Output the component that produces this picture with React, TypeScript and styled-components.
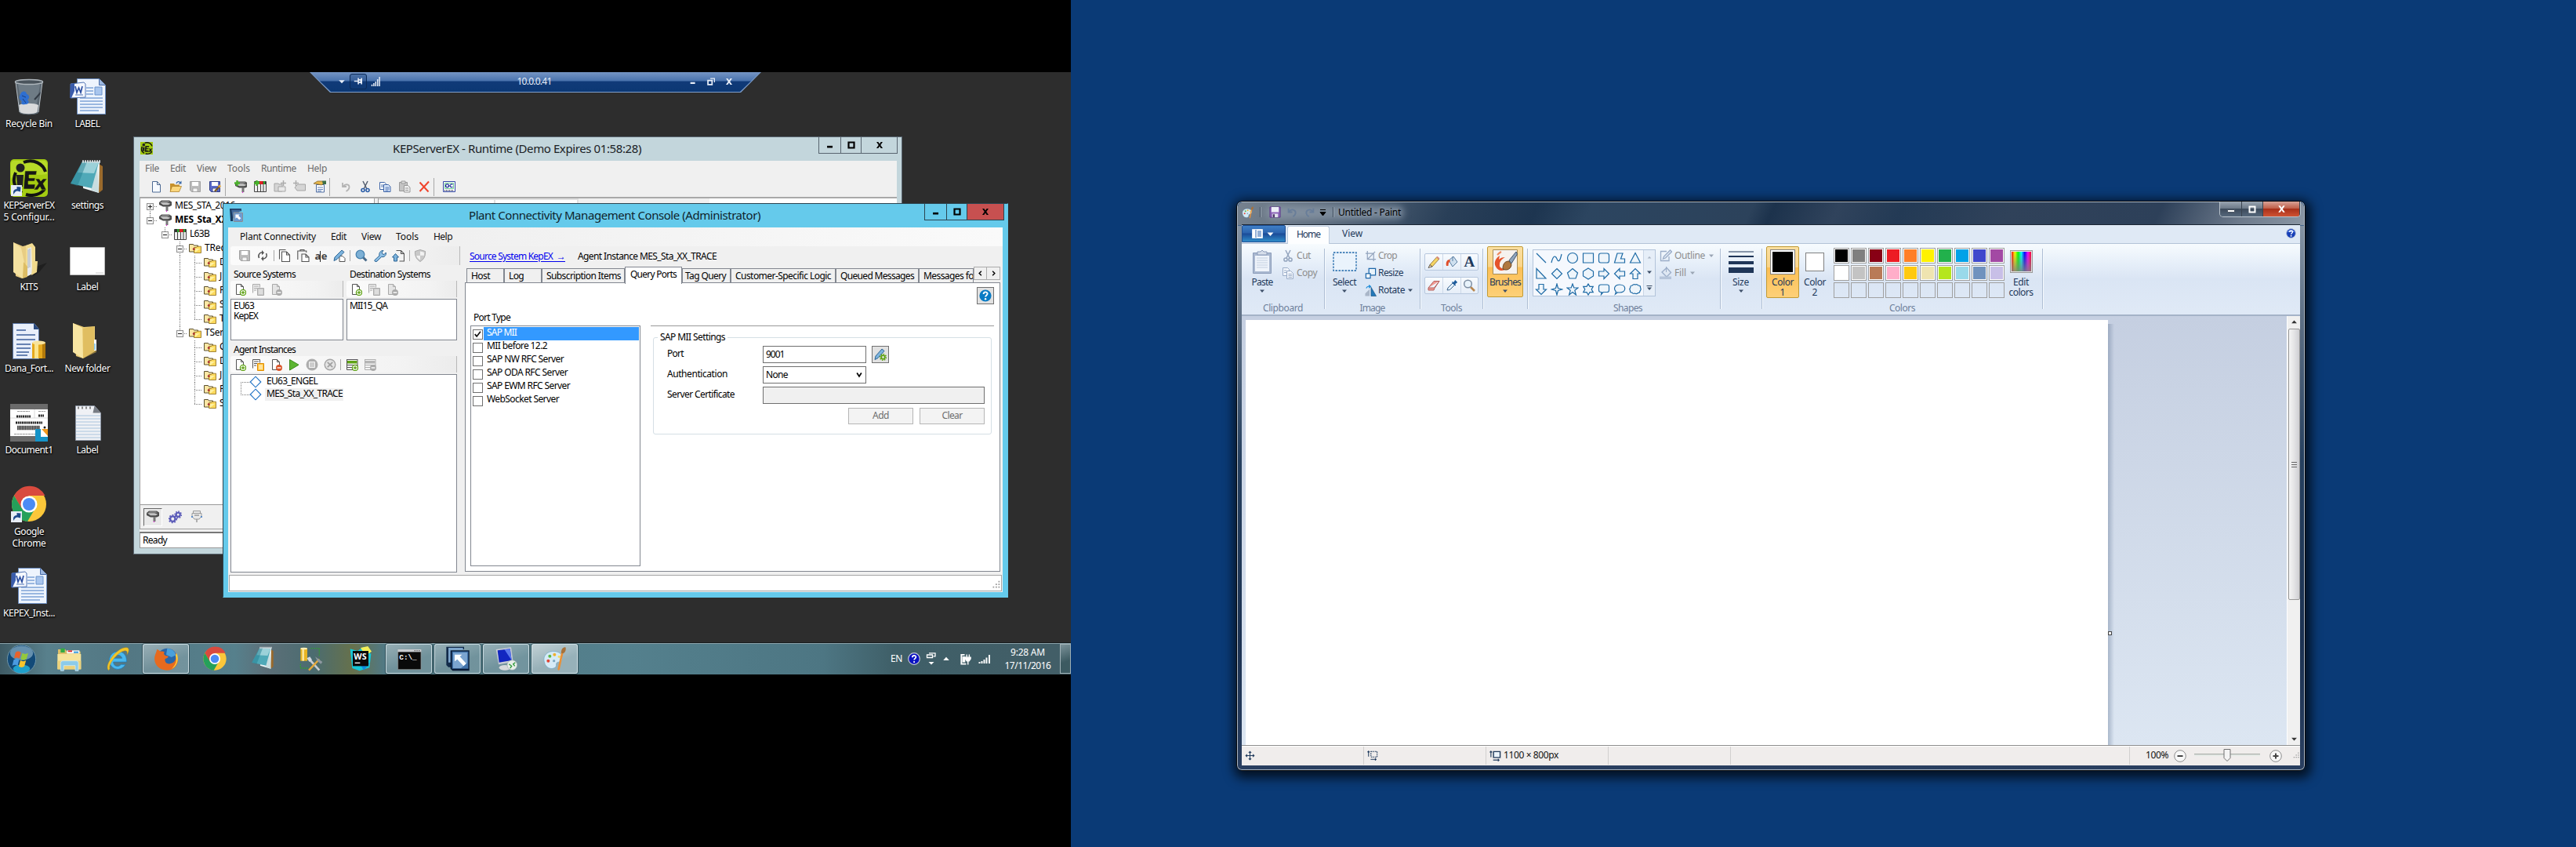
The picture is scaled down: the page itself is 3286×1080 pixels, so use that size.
import React, { useLayoutEffect, useRef } from 'react';
import styled, { createGlobalStyle, css } from 'styled-components';

const Global = createGlobalStyle`
  * { box-sizing: border-box; }
  html, body { margin: 0; padding: 0; background: #000; }
  body { font-family: 'Noto Sans', 'Open Sans', sans-serif; font-size: 12px; line-height: 14px; color: #000; overflow: hidden; }
  svg { display: block; flex: none; }
`;

/* ---------- text ---------- */

const TextSpan = styled.span<{ $color?: string; $size?: number; $bold?: boolean; $line?: boolean }>`
  display: inline-block;
  flex: none;
  white-space: pre;
  color: ${p => p.$color || 'inherit'};
  font-size: ${p => (p.$size ? p.$size + 'px' : 'inherit')};
  font-weight: ${p => (p.$bold ? 700 : 400)};
  ${p => p.$line && css`text-decoration: underline; text-underline-offset: 2px;`}
`;

type TProps = { w?: number; color?: string; size?: number; bold?: boolean; line?: boolean; children: string };

/* A run of text whose tracking is adjusted so that it fills the width w. */
function T({ w, color, size, bold, line, children }: TProps) {
  const ref = useRef<HTMLSpanElement>(null);
  useLayoutEffect(() => {
    const el = ref.current;
    if (!el || !w) return;
    el.style.letterSpacing = '0px';
    const natural = el.getBoundingClientRect().width;
    const gap = (w - natural) / children.length;
    el.style.letterSpacing = Math.max(-1, Math.min(1, gap)).toFixed(3) + 'px';
  }, [w, children]);
  return <TextSpan ref={ref} $color={color} $size={size} $bold={bold} $line={line}>{children}</TextSpan>;
}

/* ---------- icons ---------- */

const page = <path d="M3.5 1.5h6l3 3v10h-9z M9.5 1.5v3h3" fill="#fff" stroke="#555" />;
const greyPage = <path d="M3.5 1.5h6l3 3v10h-9z M9.5 1.5v3h3" fill="#e4e4e4" stroke="#a9a9a9" />;
const plus = <g><circle cx="12" cy="12" r="3.6" fill="#fff" stroke="#5fa315" strokeWidth="1.3" /><path d="M12 9.8v4.4M9.8 12h4.4" stroke="#5fa315" strokeWidth="1.3" /></g>;
const minus = (c: string) => <g><circle cx="12" cy="12" r="4" fill={c} /><path d="M9.6 12h4.8" stroke="#fff" strokeWidth="1.4" /></g>;
const device = (
  <g>
    <path d="M0 3l3-2.500h10l3 2v4.500l-3 1.500H5L0 6z" fill="#4c4c4c" />
    <path d="M1 3.200h9l4.500 1.500-3 1.500H5z" fill="#c4c4c4" />
    <path d="M4 1.300h8l2 1.500H2z" fill="#8c8c8c" />
    <path d="M10 8v6" stroke="#777" strokeWidth="3" />
    <path d="M9.500 13.500v1.500" stroke="#e02ad8" strokeWidth="1.200" />
  </g>
);
const rack = (
  <g>
    <path d="M.5 1.5h15v13H.5z" fill="#eee" stroke="#444" />
    <path d="M1 1h14v4H1z" fill="#333" />
    <path d="M4 1h2.500v4H4zM12 1h2v4h-2z" fill="#2ea52e" /><path d="M7 1h4.500v4H7z" fill="#d22" />
    <path d="M4.500 5v9M8.500 5v9M12 5v9" stroke="#444" />
  </g>
);
const greenPlus = <path d="M3.5 0v7M0 3.500h7" stroke="#4bb32b" strokeWidth="2.4" />;
const floppy = (a: string, b: string) => (
  <g><path d="M1.5 1.5h13v13h-11l-2-2z" fill={a} stroke={b} /><path d="M4 2h8v5H4z" fill="#fff" /><path d="M5 10h6v4.500H5z" fill="#f4f4f4" stroke={b} strokeWidth=".8" /></g>
);

const small: Record<string, React.ReactNode> = {
  new: <path d="M3.5 1.5h6l4 4v9.500h-10z M9.500 1.500v4h4" fill="#f6faff" stroke="#4d6a94" />,
  open: <g><path d="M1 4h5l1 1.500h6V14H1z" fill="#c9922b" /><path d="M3.500 7.500h12l-3 7H1z" fill="#fbd77c" stroke="#a87820" strokeWidth=".7" /><path d="M9 4c1-3 4-3 5-1" stroke="#3b6aa8" strokeWidth="1.400" fill="none" /><path d="M15.500 .5v4h-4z" fill="#3b6aa8" /></g>,
  saveGrey: floppy('#bdbdbd', '#a0a0a0'),
  saveAs: <g>{floppy('#5c6ccc', '#2d3b86')}<path d="M8 14l6.500-7" stroke="#7c5a21" strokeWidth="2.500" /><path d="M13 8.500l2-2.200" stroke="#e0a73f" strokeWidth="3" /></g>,
  device,
  addDevice: <g><g transform="translate(1 1)">{device}</g>{greenPlus}</g>,
  rack,
  addRack: <g>{rack}{greenPlus}</g>,
  foldersGrey: <g><path d="M1 4h5l1 1h4v9H1z" fill="#d5d5d5" stroke="#a5a5a5" /><path d="M6 8h9v6H6z" fill="#e8e8e8" stroke="#a5a5a5" /><path d="M12.500 0v7M9 3.500h7" stroke="#aaa" strokeWidth="1.500" /></g>,
  tagGrey: <g><path d="M6 5h9.500v8H5l-3-4z" fill="#d5d5d5" stroke="#a5a5a5" /><path d="M3.500 0v7M0 3.500h7" stroke="#aaa" strokeWidth="1.500" /></g>,
  props: <g><path d="M3.500 5.500h10v9.500h-10z" fill="#fff" stroke="#4b6aa0" /><path d="M5 9h7M5 11.500h7M5 13.500h5" stroke="#5d7fb8" /><path d="M0 4l5-3h6l2 3-3 2-4-1z" fill="#e6b74c" stroke="#7b5a1d" strokeWidth=".7" /><path d="M11 .5h5v4.500h-4z" fill="#3d6e48" /></g>,
  undo: <path d="M4 3v5h5M4.500 8C8 3.500 13 5 12.500 9c-.2 2.500-2 4-4 5" fill="none" stroke="#b4b4b4" strokeWidth="1.800" />,
  cut: <g fill="none"><path d="M5 1l5 10M11 1L6 11" stroke="#555f70" strokeWidth="1.500" /><circle cx="5" cy="12.500" r="2" stroke="#2c5ea8" strokeWidth="1.600" /><circle cx="11" cy="12.500" r="2" stroke="#2c5ea8" strokeWidth="1.600" /></g>,
  copy: <g fill="#fff" stroke="#3d64a8"><path d="M1.500 2.500h6l2 2v7h-8z" /><path d="M6.500 5.500h6l2.500 2.500v6.500H6.500z" fill="#dbe8fb" /><path d="M3 6h3M3 8h3M8.500 9h5M8.500 11h5M8.500 13h4" strokeWidth=".9" /></g>,
  pasteGrey: <g stroke="#999"><path d="M1.500 2.500h10v11h-10z" fill="#c4c4c4" /><path d="M4 1h5v3H4z" fill="#ddd" /><path d="M7.500 6.500h5l2.500 2.500v6H7.500z" fill="#eee" /><path d="M9 10h4M9 12.500h4" /></g>,
  del: <path d="M2.500 2.500l11 12M14 1.500L2.500 14" stroke="#f0442c" strokeWidth="2" fill="none" />,
  qc: <g><path d="M.5 1.500h15v13H.5z" fill="#fff" stroke="#3347a5" /><path d="M2.500 3.500h11v7h-11z" fill="#fff" stroke="#3b6" strokeWidth=".7" /><circle cx="5.500" cy="6.800" r="2" fill="none" stroke="#22309a" strokeWidth="1.300" /><path d="M12.500 5.400c-2-1.200-3.500 .2-3.500 1.400s1.500 2.600 3.500 1.400" fill="none" stroke="#22309a" strokeWidth="1.300" /><path d="M2 12.700h12" stroke="#335" strokeDasharray="1 1" strokeWidth="1.500" /></g>,
  folders: <g><path d="M.5 2.500h5l1 1.500h5v8H.5z" fill="#fbe7a4" stroke="#5b5030" /><path d="M6.500 6.500h3l1-1.300h5v8.300h-9z" fill="#fcd95c" stroke="#8a6a1c" strokeWidth=".8" /><path d="M8 8h6l-6 5z" fill="#fdf0a0" /><circle cx="6.300" cy="8.500" r="1.500" fill="#a33" /></g>,
  gears: <g fill="none" stroke="#5a5ab8"><circle cx="5" cy="10" r="3" strokeWidth="2.200" /><circle cx="5" cy="10" r="4.600" strokeWidth="1.600" strokeDasharray="1.700 1.700" /><circle cx="11.500" cy="5" r="2.400" strokeWidth="2" /><circle cx="11.500" cy="5" r="3.900" strokeWidth="1.500" strokeDasharray="1.500 1.500" /></g>,
  plug: <g fill="#e8e8e8" stroke="#9a9a9a"><path d="M3.500 .5h9v3h-9z" /><path d="M2 3.500h12v4l-3 3.500H5L2 7.500z" /><path d="M5 6h6M8 11v4" strokeWidth="1.500" /><path d="M2 7v2M14 7v2" stroke="#3477c8" strokeWidth="1.500" /></g>,
  refresh: <g fill="none" stroke="#555" strokeWidth="1.500"><path d="M3.500 11C1.500 7 4.500 3.500 8 4.200" /><path d="M12.500 5c2 4-1 7.500-4.500 6.800" /><path d="M7 1l3 3.200L7 7.200z M9 15l-3-3.200L9 8.800z" fill="#555" stroke="none" /></g>,
  copy2: <g fill="#fff" stroke="#555" strokeWidth="1.100"><path d="M1.500 12.500V.5h8" fill="none" /><path d="M4.500 3h6l4 4v8.500h-10z M10.500 3v4h4" /></g>,
  paste2: <g fill="#fff" stroke="#555" strokeWidth="1.100"><path d="M.8 13V2h11v2M4 2V.5h5V2" fill="#f4f4f4" /><path d="M6 6h5l4 4v5.500H6z M11 6v4h4" /></g>,
  pen: <g><path d="M8 8.500h4l3 3v4H8z" fill="#fff" stroke="#555" /><path d="M2 10L11 1l3 2.500-9 9-4 2z" fill="#7db4de" stroke="#2a6393" /></g>,
  penGear: <g><path d="M2 10L10 1l3 2.500-8 9-4 2z" fill="#7db4de" stroke="#2a6393" /><circle cx="11.500" cy="11.500" r="2.300" fill="none" stroke="#5fa315" strokeWidth="1.800" /><circle cx="11.500" cy="11.500" r="3.900" fill="none" stroke="#5fa315" strokeWidth="1.500" strokeDasharray="1.500 1.500" /></g>,
  find: <g><path d="M10 10l4.500 4.500" stroke="#4a6b8a" strokeWidth="3" /><circle cx="6.500" cy="6.500" r="5.300" fill="#7db0d5" stroke="#4682b0" strokeWidth="1.300" /></g>,
  wrench: <path d="M1 13.500l6-5.500c-1-3 1.500-7 5-6.500l-2 2.500 1 2 2.200 .4L15.300 4c1 3.500-2.500 6.500-5.500 5.400L4 15c-1.500 1.500-4-.2-3-1.500z" fill="#8fc0e6" stroke="#2a6393" />,
  export: <g><path d="M5.500 1.500h6l4 4v9.500h-6M11.500 1.500v4h4" fill="none" stroke="#555" strokeWidth="1.100" /><path d="M4.500 5.500L8.500 10H6.500v5h-4v-5H.5z" fill="#7db4de" stroke="#2a6393" /></g>,
  shield: <g><path d="M8 .5l6.500 2c.5 6-2 10.500-6.500 13-4.500-2.500-7-7-6.500-13z" fill="#c9c9c9" stroke="#a8a8a8" /><path d="M8 2.500l4.800 1.300 .2 4H8zM8 8v5.500C5.500 12 3.500 10 3.300 8z" fill="#f2f2f2" /></g>,
  pageAdd: <g>{page}{plus}</g>,
  pageDel: <g>{page}{minus('#d9552a')}</g>,
  pageDelGrey: <g>{greyPage}{minus('#aaa')}</g>,
  dup: <g><path d="M1.500 12.500v-11h9v4" fill="#fff" stroke="#555" /><path d="M3 4h6M3 6.500h4M3 9h3" stroke="#555" /><path d="M7.500 6.500h8v9h-8z" fill="#ffc63b" stroke="#e08a00" /><path d="M9 9h5M9 11h5M9 13h5" stroke="#fff" /></g>,
  dupGrey: <g><path d="M1.500 12.500v-11h9v4" fill="#eee" stroke="#aaa" /><path d="M3 4h6M3 6.500h4M3 9h3" stroke="#aaa" /><path d="M7.500 6.500h8v9h-8z" fill="#ccc" stroke="#aaa" /><path d="M9 9h5M9 11h5M9 13h5" stroke="#eee" /></g>,
  play: <path d="M2.500 1.500L14 8.200 2.500 15z" fill="#5cb531" stroke="#3c8a1c" />,
  stop: <g><circle cx="8" cy="8" r="7.500" fill="#adadad" /><path d="M4.500 4.500h7v7h-7z" fill="#ccc" stroke="#f4f4f4" /></g>,
  cancel: <g><circle cx="8" cy="8" r="6.800" fill="#e4e4e4" stroke="#a5a5a5" strokeWidth="1.400" /><path d="M4.800 4.800l6.400 6.400M11.200 4.800l-6.400 6.400" stroke="#a0a0a0" strokeWidth="1.700" /></g>,
  tblAdd: <g><path d="M1.500 1v13.500h8M15 1v9M1 1.500h14M1.500 8.500h13.500M2 11.500h6" fill="none" stroke="#555" /><path d="M2 3h12.500v3.500H2z" fill="#5fa315" />{plus}</g>,
  tblDel: <g><path d="M1.500 1v13.500h8M15 1v9M1 1.500h14M1.500 8.500h13.500M2 11.500h6" fill="none" stroke="#b0b0b0" /><path d="M2 3h12.500v3.500H2z" fill="#b5b5b5" />{minus('#aaa')}</g>,
  app: <g><path d="M0 0h14v3H4v12H1z" fill="#18395f" /><path d="M2 1.500h12L4 12z" fill="#41699b" /><path d="M5 5h10.500v10.500H5z" fill="#6d9ad0" stroke="#fff" /><path d="M5 5h10.500v10.500H5z" fill="none" stroke="#123" strokeWidth=".5" /><path d="M7 7h5l-1.500 1.500 3 3-2 2-3-3L7 12z" fill="#fff" /></g>,
  diamond: <path d="M8 1.200L14.800 8 8 14.800 1.200 8z" fill="#fff" stroke="#1f72c4" strokeWidth="1.100" />,
  check: <path d="M2.500 7.500l3.500 4 7-9" fill="none" stroke="#111" strokeWidth="2.500" />,
  help: <g><circle cx="8" cy="8" r="7.600" fill="#0a7bc4" /><path d="M5.600 6c0-3.500 5-3.300 5-.4 0 1.900-2.500 1.900-2.500 4" fill="none" stroke="#fff" strokeWidth="1.900" /><circle cx="8.100" cy="12.200" r="1.200" fill="#fff" /></g>,
  helpBlue: <g><circle cx="8" cy="8" r="7.300" fill="#1840b8" stroke="#b8c4dc" strokeWidth="1.200" /><path d="M2.500 6a6 6 0 0111 0z" fill="#6c92ec" /><path d="M5.800 6.200c0-3.200 4.600-3 4.600-.4 0 1.800-2.300 1.800-2.300 3.700" fill="none" stroke="#fff" strokeWidth="1.700" /><circle cx="8.100" cy="12" r="1.100" fill="#fff" /></g>,
  helpNavy: <g><circle cx="8" cy="8" r="7.300" fill="#0a12c0" stroke="#c4c8d4" strokeWidth="1.200" /><path d="M5.800 6.200c0-3.200 4.600-3 4.600-.4 0 1.800-2.300 1.800-2.300 3.700" fill="none" stroke="#fff" strokeWidth="1.700" /><circle cx="8.100" cy="12" r="1.100" fill="#fff" /></g>,
  min: <path d="M3.500 10.500h8" stroke="currentColor" strokeWidth="3" />,
  max: <path d="M4 4h8v8H4z" fill="none" stroke="currentColor" strokeWidth="2.500" />,
  close: <path d="M3.500 3.500h2.600L8 6.200l1.900-2.700h2.600L9.400 8l3.200 4.500H9.900L8 9.700l-1.900 2.800H3.400L6.600 8z" fill="currentColor" />,
  restore: <g fill="none" stroke="currentColor" strokeWidth="1.400"><path d="M3.500 6.500h6v6h-6z" strokeWidth="2" /><path d="M7 3.500h6V9" /></g>,
  down: <path d="M3 5.500h10L8 11z" fill="currentColor" />,
  up: <path d="M3 10.500h10L8 5z" fill="currentColor" />,
  pin: <path d="M1 8h6M7.500 3v10M7.500 6h4v4h-4M12.500 3v10" stroke="currentColor" strokeWidth="2" fill="none" />,
  signal: <path d="M2 16v-3M5.200 16v-5.500M8.400 16V8M11.600 16V4M14.800 16V0" stroke="currentColor" strokeWidth="2" />,
  left: <path d="M10 4L6 8l4 4" stroke="currentColor" strokeWidth="2" fill="none" />,
  right: <path d="M6 4l4 4-4 4" stroke="currentColor" strokeWidth="2" fill="none" />,
  chev: <path d="M3.500 4L8 11 12.500 4" stroke="currentColor" strokeWidth="2.800" fill="none" />,
  power: <g fill="none" stroke="#fff" strokeWidth="1.500"><path d="M7 2H2.500v12.500H9" strokeWidth="2" /><path d="M4.500 5h2.500v6.500H4.500z" fill="#fff" /><path d="M8 5.500h7v2l-2 3h-3l-2-3zM9.800 1.500v4M13.200 1.500v4M11.500 11v4.500" fill="#fff" /></g>,
  kbd: <g fill="none" stroke="#fff" strokeWidth="1.300"><path d="M5 .8h8v4h-2.500M2.500 3h7v3.500h-7z" /><path d="M4.500 12h7L8 15.500z" fill="#fff" stroke="none" /></g>,

  savePaint: <g><path d="M1 1h14v14H1z" fill="#8c63b8" stroke="#5c3a86" /><path d="M3 1h10v7H3z" fill="#eceff6" /><path d="M4 10h8v5H4z" fill="#dfe2ec" /><path d="M5 11h2.500v4H5z" fill="#4a3568" /></g>,
  undoP: <path d="M2 2v6h6M3 7c3.500-5 11-3 10 3-.4 2.500-2 4-4 5" stroke="#687d99" strokeWidth="2.300" fill="none" />,
  redoP: <path d="M14 2v6H8M13 7C9.500 2 2 4 3 10c.4 2.500 2 4 4 5" stroke="#687d99" strokeWidth="2.300" fill="none" />,
  cutP: <g fill="none" stroke="#94a5be" strokeWidth="1.500"><path d="M5 1l5 10M11 1L6 11" /><circle cx="5" cy="13" r="2.100" /><circle cx="11" cy="13" r="2.100" /></g>,
  copyP: <g fill="#f1f5fb" stroke="#9badc8"><path d="M1.500 1.500h6l2 2v8h-8z" /><path d="M6.500 5.500h5l3 3v7h-8z" /><path d="M3 5h3M3 7.500h3M8.500 9.500h4.500M8.500 11.500h4.500M8.500 13.500h4.500" /></g>,
  cropP: <path d="M3.500 1v11.500H15M1 4.500h11V15M3.500 12.500L14 2" stroke="#94a5be" strokeWidth="1.300" fill="none" />,
  resizeP: <g stroke="#1c66a8" strokeWidth="1.300"><path d="M5.500 1.500h9v9h-9z" fill="#e9f3fb" /><path d="M1.500 8.500h6v6h-6z" fill="#fff" /></g>,
  rotateP: <g><path d="M.5 15.500V12l6-6v9.500z" fill="#a9b6c8" /><path d="M8.500 3.500l7 12h-7z" fill="#2479ba" stroke="#15507f" strokeWidth=".7" /><path d="M2 5c.5-2.500 3-3 5-2.500M5.500 .5l2.500 2-2.500 2" stroke="#1f8bd8" strokeWidth="1.200" fill="none" /></g>,
  pencil: <g><path d="M3 11.500L12 1.500l3 2.500-9 10z" fill="#f5d565" stroke="#8a6a2a" strokeWidth=".8" /><path d="M11 2.600L12.500 .8l2.900 2.500-1.500 1.800z" fill="#d98c7c" /><path d="M3 11.500L1 15.500l5-1.500z" fill="#f3d6a6" stroke="#333" strokeWidth=".7" /></g>,
  bucket: <g><path d="M4 6l6-5 5 7-6 6z" fill="#cfe0ef" stroke="#5b7ea2" /><path d="M9 1v6" stroke="#5b7ea2" /><path d="M1 13c-1-5 1-8 4-8l1 2c-2 1-2.500 3-2.500 6z" fill="#e0502c" /></g>,
  eraser: <path d="M1 11L8 2.500h7L9 11.500 8 14H1z M1 11h7.500L15 2.500" fill="#ee9a94" stroke="#b5605c" />,
  picker: <g><path d="M2 14l1-3 6-6 2.500 2.500-6 6z" fill="#dfeefb" stroke="#41688f" /><path d="M8 4l1-1 1.200 1 2-3 3 3-3 2.300 1 1.200-1 1z" fill="#1d5c9c" /></g>,
  lens: <g><path d="M10 10l5 5" stroke="#b98850" strokeWidth="2.600" /><circle cx="6.500" cy="6" r="4.800" fill="#e8f3fb" stroke="#7d8ea3" strokeWidth="1.500" /></g>,
  outlineP: <g fill="none" stroke="#9badc8" strokeWidth="1.300"><path d="M9 2.500H1.500v12H12V9" /><path d="M4.500 12l1-3L13.500 1 15.500 3 7.500 11z" fill="#dfe8f3" /></g>,
  fillP: <g><path d="M3 7l6-5.500 5.500 6L9 13z" fill="#dfe8f3" stroke="#9badc8" strokeWidth="1.300" /><path d="M8.500 0v7" stroke="#9badc8" /><path d="M0 12.500h15V16H0z" fill="#b6c5da" /></g>,
  move: <path d="M8 1.500v13M1.500 8h13M6 3.500l2-2 2 2M6 12.500l2 2 2-2M3.500 6l-2 2 2 2M12.500 6l2 2-2 2" stroke="#1e395b" strokeWidth="1.300" fill="none" />,
  selSize: <g fill="none" stroke="#1e395b" strokeWidth="1.200"><path d="M5.500 2.500h9v8h-9z" strokeDasharray="2 1" /><path d="M2 10V2M.5 3.500L2 2l1.500 1.500M5 14h8M11.500 12.500L13 14l-1.500 1.500" /></g>,
  imgSize: <g fill="none" stroke="#1e395b" strokeWidth="1.200"><path d="M5.500 2.500h9v8h-9z" fill="#eaf3fb" strokeWidth="1.500" /><path d="M2 10V2M.5 3.500L2 2l1.500 1.500M5 14h8M11.500 12.500L13 14l-1.500 1.500" /></g>,
  pluscircle: <g><circle cx="8" cy="8" r="7.300" fill="#f8f8f8" stroke="#8d8d8d" /><path d="M8 4.500v7M4.500 8h7" stroke="#444" strokeWidth="2" /></g>,
  minuscircle: <g><circle cx="8" cy="8" r="7.300" fill="#f8f8f8" stroke="#8d8d8d" /><path d="M4.500 8h7" stroke="#444" strokeWidth="2" /></g>,
  grip: <g fill="#9b9b9b"><path d="M12 2h2v2h-2zM12 6h2v2h-2zM8 6h2v2H8zM12 10h2v2h-2zM8 10h2v2H8zM4 10h2v2H4z" /></g>,
};

function Icon({ n, s = 16 }: { n: string; s?: number }) {
  return <svg width={s} height={s} viewBox="0 0 16 16">{small[n]}</svg>;
}

/* large pictures on a 48 unit grid */
const word = (
  <g>
    <path d="M10.500 1.500h28l8 8v37h-36z" fill="#eef4fd" stroke="#6a8cc0" />
    <path d="M38.500 1.500v8h8" fill="#9db8e0" stroke="#4a6da8" />
    <path d="M22 13h9M22 17h9M22 21h9M14 26h29M14 30h29M14 34h29M14 38h29M14 42h24" stroke="#7fa3d6" strokeWidth="1.300" />
    <path d="M33 12h9v10h-9z" fill="#a9c6ee" stroke="#6b93cc" />
    <path d="M2 8l17-2 2 2v17l-19 1z" fill="#f5f8fe" stroke="#5577b5" /><path d="M2 8l5-1v10l-4 9H1z" fill="#3a5cab" />
    <path d="M8 11l2 8 2.500-6 2.500 6 2-8" stroke="#2c4ea0" strokeWidth="1.700" fill="none" /><path d="M8 22h10" stroke="#5577b5" />
  </g>
);
const chrome = (
  <g>
    <circle cx="24" cy="24" r="22" fill="#fbc73a" />
    <path d="M24 13h20.500A22 22 0 005 13l9.500 16.500z" fill="#d94a3e" />
    <path d="M5 13a22 22 0 0017 33l10-17H14.500z" fill="#25a05a" />
    <circle cx="24" cy="24" r="10.500" fill="#fff" /><circle cx="24" cy="24" r="8" fill="#4b8bf5" />
  </g>
);
const notepad = (
  <g>
    <path d="M38 6l5 3v30l-5 4z" fill="#9a6a2c" />
    <path d="M17 3h22l-1 40-20-6z" fill="#eef6f8" /><path d="M36 8l2 35-10-4z" fill="#c8dde0" />
    <path d="M17 3l21 1-9 33L2 31z" fill="#4fa9b8" /><path d="M17 3l21 1-6 14-21-1z" fill="#b5dfe4" opacity=".75" /><path d="M17 3l6 0-12 31-9-3z" fill="#237f92" opacity=".5" />
    <path d="M17 3h23" stroke="#cfd5d8" strokeWidth="3.500" strokeDasharray="2 1" />
  </g>
);
const folder = (
  <g>
    <path d="M5 1l14 5 14-1v32L18 46 9 43z" fill="#e9cb74" /><path d="M5 1l12 6 1 39L5 38z" fill="#f7e5a3" /><path d="M18 8l14-3v16l3 5v12l-17 8z" fill="#d9b552" opacity=".55" />
    <path d="M32 22h3v14h-3z" fill="#fff" /><path d="M33 27v8" stroke="#2d9de0" />
  </g>
);
const shortcut = <g><path d="M1 33h14v14H1z" fill="#e8eef6" /><path d="M4.500 45c-1.500-4 .5-7 4-7v-3l5 .5-.5 6-4-1c-2.500 .5-3.500 2-4.500 4.500z" fill="#1f4b8c" /></g>;
const kepx = (
  <g>
    <path d="M17 4C30-1 42 6 45 16M7 17C2 28 6 38 15 43M20 45C30 48 40 44 44 38" fill="none" stroke="#131313" strokeWidth="4" />
    <circle cx="13" cy="11" r="5.500" fill="#222" /><path d="M8 20h9l-1 15H9z" fill="#222" />
    <path d="M19 15h15l-1 5h-9v4h8l-1 4h-8v4h9l-1 6H17z M32 25h5l2 3 3-3h5l-5 6 4 8h-6l-2-4-3 4h-5l6-8z" fill="#161616" stroke="#a0c40c" strokeWidth=".6" />
  </g>
);
const palette = (
  <g>
    <path d="M4 32C-1 18 10 8 24 10c12 1 17 10 13 17-3 5-8 2-10 5s1 6-3 9C17 45 7 42 4 32z" fill="#d6ebf6" stroke="#6fa8c8" />
    <circle cx="11" cy="28" r="3" fill="#e04535" /><circle cx="14" cy="19" r="3" fill="#5ab848" /><circle cx="23" cy="16" r="3" fill="#f0b030" /><circle cx="22" cy="28" r="2.500" fill="#7fa8c0" /><circle cx="32" cy="20" r="2.500" fill="#f5dc60" />
    <path d="M38 12l-7 32" stroke="#e8913a" strokeWidth="4" strokeLinecap="round" /><path d="M36 13c-1-7 4-12 8-11 2 5-1 11-5 12z" fill="#a8723a" />
  </g>
);
const monoText = { fontFamily: "'Open Sans', sans-serif", fontWeight: 700 };

const large: Record<string, React.ReactNode> = {
  bin: <g><path d="M7 5l5 40c3 3 21 3 24 0l5-40z" fill="#5a6670" /><path d="M10 9l5 30h18l5-30z" fill="#76848f" opacity=".7" /><path d="M11 35c5-3 20-3 25 0l-1.500 9c-4 3-18 3-22 0z" fill="#d9dadb" /><path d="M13 21c3-6 8-3 8 0 4 1 4 6 1 7 4 4 0 6-3 6-4 1-6-1-4-4-4-2-4-6-2-9z" fill="#2f6fd0" /><path d="M16 27l4 5M15 23l5 2" stroke="#1c3f80" /><path d="M31 28l9-10" stroke="#333b45" strokeWidth="2" /><path d="M7 6l5 38M41 6l-5 38" stroke="#b8c0c6" /><ellipse cx="24" cy="5.500" rx="17.500" ry="3" fill="#4a545c" stroke="#aeb6bc" strokeWidth="1.500" /></g>,
  word,
  kep: <g><rect x="0" y="0" width="48" height="48" rx="5" fill="#a4cc12" /><path d="M5 2h38c3 0 4 2 4 5v12C30 22 14 16 1 24V7c0-3 1-5 4-5z" fill="#bfe032" opacity=".7" />{kepx}{shortcut}</g>,
  notepad,
  kits: <g><path d="M33 33l14-5-10 12-8 5z" fill="#1c1c1c" opacity=".8" /><path d="M4 2l12 5 12-3 1 38-14 6-8-3z" fill="#e8cd83" /><path d="M20 6l8-3 4 5v32l-12 6z" fill="#f2dc92" /><path d="M22 10l5-2 1 34-6 3z" fill="#e9ebee" /><path d="M4 2l10 7 4 19-2 20L4 40z" fill="#f4e1a0" /><path d="M17 27l5 6v13l-6 2z" fill="#ddbd64" /><path d="M29 26h6l-1 14-7 4z" fill="#f0d98c" /><path d="M23 11v24M25 10v24" stroke="#a8b0b8" /></g>,
  blank: <g><path d="M1.500 8.500h44v35h-44z" fill="#fff" stroke="#ddd" strokeWidth=".5" /><path d="M34 41h10" stroke="#ccc" /></g>,
  dana: <g><path d="M3.500 1.500h27l6 7v38h-33z" fill="#e9effa" stroke="#5c78a8" /><path d="M30 1v8h7" fill="#2b4a7e" /><path d="M8 10h12M8 16h24M8 22h24M8 28h18M8 33h18M8 38h16M8 42h14" stroke="#3d5f9a" strokeWidth="1.400" /><path d="M28 26h17v20H28z" fill="#e5a91d" /><path d="M31 26h5v20h-5z" fill="#fbe48c" /><path d="M41 26h4v20h-4z" fill="#b27a0c" /><ellipse cx="36.500" cy="26" rx="8.500" ry="2.500" fill="#f8e39d" /></g>,
  folder,
  doc: <g><path d="M0 0h48v48H0z" fill="#6b6b6b" /><path d="M0 7h48v34H0z" fill="#fff" /><path d="M31 7v11M0 18h48" stroke="#ccc" strokeWidth=".7" /><path d="M9 9.500h16M36 9.500h9M5 38.500h28" stroke="#999" strokeWidth="1.200" strokeDasharray="3 .6" /><path d="M8 16h18M7 24h34M36 15h7" stroke="#222" strokeWidth="3" strokeDasharray="2 .7" /><path d="M9 30.500h29" stroke="#444" strokeWidth="5.500" strokeDasharray="1.500 .4" /><circle cx="44" cy="30" r="1.500" fill="#222" /><path d="M32 32h16v16H32z" fill="#1593c8" /><path d="M39 32h5l4 4v6h-9z" fill="#fff" /><path d="M40 32h8v9z" fill="#f29a1f" /></g>,
  txt: <g><path d="M8.500 2.500h24l8 9v35h-32z" fill="#eff1f5" stroke="#8c97a8" strokeWidth=".8" /><path d="M9 15h31M9 19h31M9 23h31M9 27h31M9 31h31M9 35h31M9 39h31M9 43h31" stroke="#a9c4dd" /><path d="M32.500 2.500l-2 9h10z" fill="#777c84" /><path d="M11 5h18" stroke="#888" strokeWidth="3" strokeDasharray="2 3" /></g>,
  chromeShort: <g>{chrome}{shortcut}</g>,
  chrome,
  kepSmall: <g><path d="M0 0h48v48H0z" fill="#a4cc12" />{kepx}</g>,
  start: <g><circle cx="24" cy="24" r="23.500" fill="#124a78" stroke="#7fa5b8" /><ellipse cx="24" cy="14" rx="19" ry="12" fill="#9dc0d2" opacity=".6" /><ellipse cx="24" cy="40" rx="14" ry="7" fill="#27c4ee" opacity=".7" /><path d="M14 13c4-3 6-2 9 0l-2.500 10c-3-2-6-2-9 0z" fill="#e8622c" /><path d="M25 14c4 2 6 2 10 0l-3 10c-3 2-6 2-9.500 0z" fill="#94c83c" /><path d="M11 25c4-2 6-2 9 0l-2.500 10c-3-2-6-2-9 0z" fill="#4a9ae0" /><path d="M22 26c4 2 6 2 9.500 0l-3 10c-3 2-6 2-9 0z" fill="#fac42c" /></g>,
  explorer: <g><path d="M3 6h14l3 4h26v34H3z" fill="#dcc06a" /><path d="M8 4h8v8H8z" fill="#3a4" /><path d="M20 8h24v6H20z" fill="#fff" /><path d="M22 8h8v3h-8z" fill="#d33" /><path d="M33 10h9v3h-9z" fill="#39d" /><path d="M2 15h45v29H2z" fill="#f6e39a" /><path d="M2 28h45v16H2z" fill="#ecd27c" /><path d="M8 47V32q0-4 4-4h26q4 0 4 4v15h-6V37H14v10z" fill="#8ccbea" stroke="#d8f0fa" /></g>,
  ie: <g><path d="M24.500 10A16.500 17 0 1039 35h-8.500C26 41 16 39 16 30h25C42 18 36 10 24.500 10zM16 23c1-8 15-8 16.500 0z" fill="#4ab8ee" stroke="#1a7cc0" /><path d="M7 46C-4 38 25-2 43 3c4 2 2 9-1 13 1-5 0-9-6-7C22 13 6 35 9 43z" fill="#f2c529" stroke="#c08f0c" strokeWidth=".6" /></g>,
  firefox: <g><circle cx="26" cy="23" r="19" fill="#2a66a8" /><path d="M26 4a19 19 0 0117 13l-9 4-10-5z" fill="#4aa0dc" /><path d="M2 20C4 12 6 10 6 6c4 1 5 3 7 4 3-1 6 0 8 1-3 3-1 6 2 7l5 1c0 3-3 4-6 5-2 9 7 12 14 8 7-4 8-12 5-20 9 10 7 27-8 33C15 50-1 37 2 20z" fill="#e66a1f" /><path d="M44 13c5 12 1 25-10 31 5-6 12-13 8-26z" fill="#ffd23b" /></g>,
  tools: <g><path d="M2 4h13v24H2z" fill="#e8b422" /><path d="M5 4h4v24H5z" fill="#fbe69a" /><ellipse cx="8.500" cy="4.500" rx="6.500" ry="2" fill="#fff0b8" /><path d="M22 4h16v14M2 34v8h16" stroke="#2ea22a" strokeWidth="2" strokeDasharray="2 2" fill="none" /><path d="M18 24l20 22" stroke="#c8ccd0" strokeWidth="4" /><path d="M38 25L18 46" stroke="#e5a83a" strokeWidth="3.500" /><path d="M30 20l14 10-3 4-6-5z" fill="#8e98a0" /><path d="M14 23l6-3 4 6-5 4z" fill="#d5dade" /></g>,
  ws: <g><path d="M4 5l14 4L30 1l14 14-3 26-19 6L8 42z" fill="#14c8d8" /><path d="M24 3l14-3 7 10-12 8z" fill="#f4ef58" /><path d="M24 36l18-4-12 14z" fill="#0d8de0" /><path d="M9 9h30v29H9z" fill="#0a0a0a" /><text x="11" y="25" fontSize="16" fill="#fff" {...monoText}>WS</text><path d="M13 32h10" stroke="#fff" strokeWidth="2" /></g>,
  cmd: <g><path d="M2.500 6.500h44v38h-44z" fill="#0a0a0a" stroke="#999" /><path d="M2 6h45v5H2z" fill="#c8ccd0" /><path d="M34 8.500h11" stroke="#555" strokeWidth="2" strokeDasharray="2 2" /><text x="5" y="25" fontSize="14" fill="#fff" fontFamily="'Liberation Mono', monospace" fontWeight="700">C:\_</text></g>,
  pco: <g><path d="M2 1h34v5H11v34H6L2 36z" fill="#122b4a" /><path d="M6 3h28v4H12v24H6z" fill="#7da5cc" /><path d="M10 8h36v39H14l-4-4z" fill="#0a1c38" /><path d="M13 10h31v33H13z" fill="#4273aa" /><path d="M15 12h27v20L30 42H15z" fill="#7ba4d0" /><path d="M18 16h14l-4 4 12 13-5 5-12-13-5 4z" fill="#fff" /></g>,
  rdp: <g><path d="M4 6l29-4 4 28-28 5z" fill="#c8ccd4" /><path d="M7 8l24-3 3 22-24 4z" fill="#1226c0" /><path d="M20 6l11-1 3 22z" fill="#5a78ec" /><ellipse cx="21" cy="41" rx="11" ry="5" fill="#d8dadc" /><circle cx="35" cy="36" r="9.500" fill="#e9eeea" stroke="#9aa" /><path d="M29 34l5 4-3 4M41 31l-4 3 3 4" stroke="#2f9a3a" strokeWidth="2" fill="none" /></g>,
  palette,
};

function Picture({ n, s = 48 }: { n: string; s?: number }) {
  return <svg width={s} height={s} viewBox="0 0 48 48">{large[n]}</svg>;
}

/* ---------- frame ---------- */

const Stage = styled.div`display: flex; width: 3286px; height: 1080px; overflow: hidden;`;
const LeftMonitor = styled.div`width: 1366px; height: 1080px; padding: 92px 0 220px; background: #000; flex: none;`;
const RightMonitor = styled.div`position: relative; flex: 1; background: #0a3a76;`;
const Desktop = styled.div`
  position: relative; width: 1366px; height: 768px; background: #2d2d2d; overflow: hidden;
  display: flex; flex-direction: column; justify-content: space-between;
`;
const Shortcuts = styled.div`
  display: grid; grid-template-columns: 74px 75px; grid-auto-flow: column;
  grid-template-rows: repeat(7, 104px); height: 727px; padding-top: 7px;
`;
const Shortcut = styled.div`
  display: flex; flex-direction: column; align-items: center; gap: 3px; color: #fff; line-height: 15px; height: 104px;
  text-shadow: 0 1px 2px #000, 1px 1px 2px #000;
`;
const Lines = styled.div`display: flex; flex-direction: column; align-items: center;`;

type Sc = { icon: string; text: [string, number][] };
const shortcuts: Sc[] = [
  { icon: 'bin', text: [['Recycle Bin', 60]] },
  { icon: 'kep', text: [['KEPServerEX', 65], ['5 Configur...', 65]] },
  { icon: 'kits', text: [['KITS', 23]] },
  { icon: 'dana', text: [['Dana_Fort...', 62]] },
  { icon: 'doc', text: [['Document1', 61]] },
  { icon: 'chromeShort', text: [['Google', 38], ['Chrome', 43]] },
  { icon: 'word', text: [['KEPEX_Inst...', 66]] },
  { icon: 'word', text: [['LABEL', 32]] },
  { icon: 'notepad', text: [['settings', 41]] },
  { icon: 'blank', text: [['Label', 28]] },
  { icon: 'folder', text: [['New folder', 58]] },
  { icon: 'txt', text: [['Label', 28]] },
];

/* remote session bar */
const Bar = styled.div`
  position: absolute; left: 395px; top: 0; width: 576px; height: 26px; background: #7f9fcc;
  clip-path: polygon(0 0, 100% 0, 550px 100%, 26px 100%);
`;
const BarInner = styled.div`
  height: 25px; margin: 0 1px; color: #e8eef8; display: flex; align-items: center; padding: 0 33px 2px 34px;
  background: linear-gradient(#7595c4 0, #4a73ad 11px, #103a78 12px, #0c3874 100%);
  clip-path: polygon(0 0, 100% 0, 548px 100%, 26px 100%);
`;
const PinBox = styled.span`width: 22px; height: 20px; border: 1px solid #0b2a58; border-radius: 3px; background: rgba(20,60,120,.35); display: grid; place-items: center; margin: 0 5px 0 4px;`;
const Spacer = styled.span<{ $w?: number }>`${p => (p.$w ? `width:${p.$w}px;flex:none;` : 'flex:1;')}`;

/* ---------- window chrome ---------- */

const Win = styled.section<{ $x: number; $y: number; $w: number; $h: number; $bg: string; $edge: string; $flat?: boolean }>`
  position: absolute; left: ${p => p.$x}px; top: ${p => p.$y}px; width: ${p => p.$w}px; height: ${p => p.$h}px;
  background: ${p => p.$bg}; border: 1px solid ${p => p.$edge}; display: flex; flex-direction: column; overflow: hidden;
  ${p => p.$flat && css`border-right-color: ${p.$bg}; border-bottom-color: ${p.$bg};`}
`;
const TitleBar = styled.header`position: relative; height: 30px; flex: none; display: flex; align-items: center; justify-content: center; padding: 0 2px 2px 0;`;
const TitleIcon = styled.span`position: absolute; left: 8px; top: 6px;`;
const WinButtons = styled.div<{ $edge: string; $r: number }>`
  position: absolute; right: ${p => p.$r}px; top: -1px; height: 22px; display: flex; border: 1px solid ${p => p.$edge};
`;
const WinButton = styled.span<{ $w: number; $bg?: string; $edge: string; $last?: boolean }>`
  width: ${p => p.$w}px; display: grid; place-items: center; background: ${p => p.$bg || 'transparent'};
  border-right: ${p => (p.$last ? '0' : '1px solid ' + p.$edge)};
`;
const Client = styled.div<{ $m: string }>`flex: 1; min-height: 0; margin: ${p => p.$m}; background: #f0f0f0; display: flex; flex-direction: column;`;
const Menu = styled.nav<{ $h: number; $gap: number; $pad: number; $color: string; $bg?: string }>`
  height: ${p => p.$h}px; flex: none; display: flex; align-items: center; gap: ${p => p.$gap}px; padding: 0 0 1px ${p => p.$pad}px; color: ${p => p.$color};
  background: ${p => p.$bg || 'transparent'};
`;
const Tools = styled.div<{ $h: number; $pad?: number; $w?: number; $soft?: boolean }>`
  height: ${p => p.$h}px; flex: none; width: ${p => (p.$w ? p.$w + 'px' : 'auto')}; display: flex; align-items: center; padding-left: ${p => p.$pad || 0}px;
  ${p => p.$soft && css`background: linear-gradient(90deg, #fbfbfb, #f3f3f3 75%, #ececec); border-right: 1px solid #b8b8b8; border-radius: 3px 0 0 3px;`}
`;
const Cell = styled.span<{ $w: number }>`width: ${p => p.$w}px; flex: none; display: grid; place-items: center;`;
const Rule = styled.span<{ $l: number; $r: number; $h: number }>`width: 1px; height: ${p => p.$h}px; margin: 0 ${p => p.$r}px 0 ${p => p.$l}px; background: #a8a8a8; flex: none;`;

const cells = (names: string[], w: number) => names.map((n, i) => <Cell key={i} $w={w}><Icon n={n} /></Cell>);

/* ---------- KEPServerEX ---------- */

const Panes = styled.div`flex: 1; min-height: 0; display: flex; gap: 4px; border-top: 2px solid #a9a9a9;`;
const TreePane = styled.div`width: 300px; background: #fff; border: 1px solid #a0a0a0; border-top: 0; display: flex; flex-direction: column;`;
const ListPane = styled.div`flex: 1; display: flex; background: #fff; border-left: 1px solid #999; height: 100%;`;
const ListHead = styled.span<{ $w: number }>`width: ${p => p.$w}px; height: 8px; border: 2px solid #e0e0e0; border-left: 0;`;
const ListGap = styled.span`width: 167px; height: 8px; background: #f0f0f0;`;
const TreeRows = styled.div`flex: 1; padding: 1px 0 0 3px; overflow: hidden;`;
const TreeRow = styled.div`height: 18px; display: flex; align-items: center; & > span:last-child { margin-top: -2px; }`;
const v = 'repeating-linear-gradient(#7a7a7a 0 1px, transparent 1px 2px)';
const h = 'repeating-linear-gradient(90deg, #7a7a7a 0 1px, transparent 1px 2px)';
const Guide = styled.span<{ $up?: boolean; $down?: boolean; $right?: boolean }>`
  width: 19px; height: 18px; flex: none; display: grid; place-items: center;
  background-image: ${v}, ${v}, ${h};
  background-repeat: no-repeat;
  background-size: 1px ${p => (p.$up ? 9 : 0)}px, 1px ${p => (p.$down ? 9 : 0)}px, ${p => (p.$right ? 10 : 0)}px 1px;
  background-position: 9px 0, 9px 9px, 9px 9px;
`;
const Expander = styled.span`
  width: 9px; height: 9px; border: 1px solid #919191; background: #f4f4f4; display: grid; place-items: center;
`;
const KIcon = styled.span`width: 19px; margin-right: 3px; flex: none; display: grid; place-items: center;`;
const TabStrip = styled.div`height: 31px; flex: none; background: #f0f0f0; border-top: 1px solid #999; display: flex; align-items: center; padding-left: 4px;`;
const TabIcon = styled.span<{ $w: number; $on?: boolean }>`
  width: ${p => p.$w}px; height: 23px; display: grid; place-items: center; ${p => p.$on && css`border: 1px solid #666; border-right-color: #fff; border-bottom-color: #fff; background: #e9e9e9;`}
`;
const KStatus = styled.div`margin-top: 3px; height: 21px; flex: none; background: #fff; border: 1px solid #999; border-top: 2px solid #777; padding: 0 0 0 3px; display: flex; align-items: center;`;

type Node = { level: number; text: string; icon: string; open?: '+' | '-'; up?: boolean; down?: boolean; through?: number; bold?: boolean; w?: number };
const kids = (names: string, through?: number): Node[] =>
  names.split('').map((text, i) => ({ level: 3, text, icon: 'folders', up: true, down: i < names.length - 1, through }));
const nodes: Node[] = [
  { level: 0, text: 'MES_STA_2016', icon: 'device', open: '+', down: true, w: 77 },
  { level: 0, text: 'MES_Sta_XX', icon: 'device', open: '-', up: true, bold: true, w: 67 },
  { level: 1, text: 'L63B', icon: 'rack', open: '-', up: true, w: 25 },
  { level: 2, text: 'TRec', icon: 'folders', open: '-', up: true, down: true, w: 26 },
  ...kids('DJPST', 2),
  { level: 2, text: 'TServ', icon: 'folders', open: '-', up: true, w: 30 },
  ...kids('CDJPS'),
];

function KepWindow() {
  const e = '#596570';
  return (
    <Win $x={170} $y={82} $w={981} $h={533} $bg="#c3d6dc" $edge={e}>
      <TitleBar>
        <TitleIcon><Picture n="kepSmall" s={16} /></TitleIcon>
        <T w={317} size={15} color="#1b2226">KEPServerEX - Runtime (Demo Expires 01:58:28)</T>
        <WinButtons $edge={e} $r={5}>
          <WinButton $w={28} $edge={e}><Icon n="min" s={14} /></WinButton>
          <WinButton $w={26} $edge={e}><Icon n="max" s={14} /></WinButton>
          <WinButton $w={45} $edge={e} $last><Icon n="close" s={14} /></WinButton>
        </WinButtons>
      </TitleBar>
      <Client $m="0 6px 7px 7px">
        <Menu $h={20} $gap={14} $pad={7} $color="#6b6b6b">
          <T w={18}>File</T><T w={20}>Edit</T><T w={25}>View</T><T w={29}>Tools</T><T w={45}>Runtime</T><T w={25}>Help</T>
        </Menu>
        <Tools $h={26} $pad={8}>
          {cells(['new', 'open', 'saveGrey', 'saveAs'], 25.25)}
          <Rule $l={0} $r={6} $h={23} />
          {cells(['addDevice', 'addRack', 'foldersGrey', 'tagGrey', 'props'], 25.25)}
          <Rule $l={0} $r={7} $h={23} />
          {cells(['undo', 'cut', 'copy', 'pasteGrey', 'del'], 25)}
          <Rule $l={0} $r={6} $h={23} />
          {cells(['qc'], 26)}
        </Tools>
        <Panes>
          <TreePane>
            <TreeRows>
              {nodes.map((n, i) => (
                <TreeRow key={i}>
                  {Array.from({ length: n.level }, (_, k) => <Guide key={k} $up={n.through === k} $down={n.through === k} />)}
                  <Guide $up={n.up} $down={n.down} $right>
                    {n.open && (
                      <Expander>
                        <svg width="7" height="7"><path d={n.open === '+' ? 'M1 3.500h5M3.500 1v5' : 'M1 3.500h5'} stroke="#222" /></svg>
                      </Expander>
                    )}
                  </Guide>
                  <KIcon><Icon n={n.icon} /></KIcon>
                  <T w={n.w} bold={n.bold}>{n.text}</T>
                </TreeRow>
              ))}
            </TreeRows>
            <TabStrip>
              <TabIcon $w={24} $on><Icon n="device" /></TabIcon>
              <TabIcon $w={32}><Icon n="gears" s={17} /></TabIcon>
              <TabIcon $w={24}><Icon n="plug" /></TabIcon>
            </TabStrip>
          </TreePane>
          <ListPane><ListHead $w={149} /><ListHead $w={106} /><ListGap /></ListPane>
        </Panes>
        <KStatus><T w={31}>Ready</T></KStatus>
      </Client>
    </Win>
  );
}

/* ---------- Plant Connectivity ---------- */

const PcoBody = styled.div`flex: 1; min-height: 0; display: flex;`;
const Left = styled.div`width: 302px; flex: none; padding-left: 3px; display: flex; flex-direction: column;`;
const Right = styled.div`flex: 1; min-width: 0; display: flex; flex-direction: column; padding: 0 3px 1px 0;`;
const Pair = styled.div`display: flex; gap: 4px;`;
const Col = styled.div<{ $w: number; $grow?: boolean }>`width: ${p => p.$w}px; display: flex; flex-direction: column; ${p => p.$grow && css`flex: 1;`}`;
const Caption = styled.div<{ $h: number; $pt: number }>`height: ${p => p.$h}px; padding: ${p => p.$pt}px 0 0 4px; flex: none;`;
const Box = styled.div<{ $h?: number }>`
  ${p => (p.$h ? `height:${p.$h}px;` : 'flex:1;')} margin-top: 2px; background: #fff; border: 1px solid #828790; padding: 1px 0 0 3px; line-height: 13px; display: flex; flex-direction: column; align-items: flex-start;
`;
const AgentRow = styled.div`height: 16px; display: flex; align-items: center; padding-left: 9px;`;
const AgentName = styled.span<{ $on?: boolean }>`height: 16px; line-height: 14px; padding: 0 1px 0 2px; margin-left: 4px; background: ${p => (p.$on ? '#f0f0f0' : 'none')};`;
const Elbow = styled.span<{ $last?: boolean }>`
  width: 11px; height: 16px; background-image: ${v}, ${h}; background-repeat: no-repeat;
  background-size: 1px 8px, 11px 1px; background-position: 0 ${p => (p.$last ? 0 : 8)}px, 0 8px;
`;
const Crumbs = styled.div`height: 26px; display: flex; align-items: center; gap: 16px; padding: 0 0 1px 6px; flex: none;`;
const Tabs = styled.div`position: relative; height: 20px; flex: none; display: flex; align-items: flex-end; padding-left: 2px; overflow: visible; z-index: 1;`;
const Tab = styled.span<{ $w: number; $on?: boolean; $pl: number }>`
  width: ${p => p.$w}px; height: ${p => (p.$on ? 22 : 18)}px; flex: none; overflow: hidden; display: flex; align-items: center; padding-left: ${p => p.$pl}px;
  border: 1px solid #828790; border-bottom: 0; ${p => (p.$on ? css`background:#fff;margin-bottom:-2px;padding-bottom:4px;` : css`background:#f0f0f0;`)}
`;
const Spin = styled.span`width: 17px; height: 17px; border: 1px solid #acacac; background: #f0f0f0; display: grid; place-items: center; margin-bottom: 3px; flex: none; & + & { border-left: 0; }`;
const Page = styled.div`flex: 1; background: #fff; border: 1px solid #828790; display: flex; flex-direction: column; padding: 5px 7px 6px 6px;`;
const HelpButton = styled.span`align-self: flex-end; width: 22px; height: 22px; border: 1px solid #707070; background: #e1e1e1; display: grid; place-items: center;`;
const PageCols = styled.div`flex: 1; display: flex; gap: 13px; margin-top: 10px;`;
const PortList = styled.div`flex: 1; border: 1px solid #828790; padding: 1px; background: #fff;`;
const PortCol = styled.div`width: 218px; display: flex; flex-direction: column;`;
const PortRow = styled.label<{ $on?: boolean }>`
  height: 17px; display: flex; align-items: center; padding-left: 1px; gap: 1px;
  & > span:last-child { flex: 1; height: 17px; line-height: 13px; padding-left: 4px; background: ${p => (p.$on ? '#3399ff' : 'none')}; color: ${p => (p.$on ? '#fff' : '#000')}; }
`;
const CheckBox = styled.span`width: 13px; height: 13px; margin-top: 1px; border: 1px solid #707070; background: #fff; display: grid; place-items: center; flex: none;`;
const Settings = styled.div`flex: 1; margin-top: 17px; border-top: 1px solid #999; padding: 7px 3px 0 3px;`;
const Field = styled.fieldset`margin: 0; height: 131px; border: 1px solid #d5dfe5; border-radius: 3px; padding: 4px 8px 0 17px; display: flex; flex-direction: column; gap: 4px;`;
const Legend = styled.legend`margin-left: -12px; padding: 0 3px; height: 14px; line-height: 13px;`;
const FormRow = styled.div`height: 22px; display: flex; align-items: center;`;
const Key = styled.span`width: 122px; flex: none; padding-bottom: 3px;`;
const Input = styled.div<{ $w: number; $off?: boolean }>`
  width: ${p => p.$w}px; height: 22px; border: 1px solid #6f6f6f; background: ${p => (p.$off ? '#f0f0f0' : '#fff')}; display: flex; align-items: center; justify-content: space-between; padding: 0 3px 1px 3px; color: #000;
`;
const Buttons = styled.div`display: flex; justify-content: flex-end; gap: 8px; margin-top: 1px;`;
const Button = styled.div`width: 83px; height: 21px; padding-bottom: 2px; border: 1px solid #b5b5b5; background: #f3f3f3; color: #6d6d6d; display: grid; place-items: center;`;
const PcoStatus = styled.div`height: 21px; margin: 3px 1px 1px; flex: none; background: #fff; border: 1px solid #a5a5a5; display: flex; justify-content: flex-end; align-items: flex-end;`;
const AE = styled.span`position: relative; font: 700 13px/14px 'Open Sans', sans-serif; color: #444; letter-spacing: .5px; &::after { content: ''; position: absolute; left: 7px; top: 1px; width: 1px; height: 14px; background: #222; }`;

const ports: [string, number][] = [['SAP MII', 38], ['MII before 12.2', 77], ['SAP NW RFC Server', 98], ['SAP ODA RFC Server', 103], ['SAP EWM RFC Server', 106], ['WebSocket Server', 92]];
const tabs: { t: string; w: number; tw: number; pl: number; on?: boolean }[] = [
  { t: 'Host', w: 48, tw: 24, pl: 5 }, { t: 'Log', w: 48, tw: 19, pl: 5 }, { t: 'Subscription Items', w: 106, tw: 95, pl: 5 },
  { t: 'Query Ports', w: 73, tw: 59, pl: 6, on: true }, { t: 'Tag Query', w: 62, tw: 52, pl: 3 }, { t: 'Customer-Specific Logic', w: 134, tw: 122, pl: 5 },
  { t: 'Queued Messages', w: 106, tw: 94, pl: 5 }, { t: 'Messages fo', w: 70, tw: 64, pl: 5 },
];

function PcoWindow() {
  const e = '#2b4450';
  return (
    <Win $x={284} $y={167} $w={1002} $h={503} $bg="#65caeb" $edge={e} $flat>
      <TitleBar>
        <TitleIcon><Icon n="app" s={17} /></TitleIcon>
        <T w={372} size={15} color="#10242c">Plant Connectivity Management Console (Administrator)</T>
        <WinButtons $edge={e} $r={4}>
          <WinButton $w={28} $edge={e}><Icon n="min" s={14} /></WinButton>
          <WinButton $w={26} $edge={e}><Icon n="max" s={14} /></WinButton>
          <WinButton $w={46} $edge={e} $bg="#c75050" $last><Icon n="close" s={14} /></WinButton>
        </WinButtons>
      </TitleBar>
      <Client $m="0 6px 6px">
        <Menu $h={24} $gap={19} $pad={15} $color="#111" $bg="linear-gradient(90deg, #f0f0f0 30%, #fafafa)">
          <T w={97}>Plant Connectivity</T><T w={20}>Edit</T><T w={25}>View</T><T w={29}>Tools</T><T w={24}>Help</T>
        </Menu>
        <PcoBody>
          <Left>
            <Tools $h={24} $pad={6} $w={293} $soft>
              {cells(['saveGrey', 'refresh'], 23.3)}
              <Rule $l={2} $r={2} $h={14} />
              {cells(['copy2', 'paste2'], 23.3)}
              <Cell $w={23}><AE>ae</AE></Cell>
              {cells(['pen'], 23.3)}
              <Rule $l={2} $r={2} $h={14} />
              {cells(['find', 'wrench', 'export'], 23.4)}
              <Rule $l={2} $r={2} $h={14} />
              {cells(['shield'], 23)}
            </Tools>
            <Pair>
              <Col $w={144}>
                <Caption $h={20} $pt={5}><T w={79}>Source Systems</T></Caption>
                <Tools $h={21} $soft>{cells(['pageAdd', 'dupGrey', 'pageDelGrey'], 23.2)}</Tools>
                <Box $h={53}><T w={26}>EU63</T><T w={31}>KepEX</T></Box>
              </Col>
              <Col $w={141}>
                <Caption $h={20} $pt={5}><T w={103}>Destination Systems</T></Caption>
                <Tools $h={21} $soft>{cells(['pageAdd', 'dupGrey', 'pageDelGrey'], 23.2)}</Tools>
                <Box $h={53}><T w={48}>MII15_QA</T></Box>
              </Col>
            </Pair>
            <Col $w={289} $grow>
              <Caption $h={20} $pt={5}><T w={79}>Agent Instances</T></Caption>
              <Tools $h={21} $soft>
                {cells(['pageAdd', 'dup', 'pageDel', 'play', 'stop', 'cancel'], 23)}
                <Rule $l={2} $r={2} $h={14} />
                {cells(['tblAdd', 'tblDel'], 23)}
              </Tools>
              <Box>
                <AgentRow><Elbow /><Icon n="diamond" /><AgentName><T w={65}>EU63_ENGEL</T></AgentName></AgentRow>
                <AgentRow><Elbow $last /><Icon n="diamond" /><AgentName $on><T w={97}>MES_Sta_XX_TRACE</T></AgentName></AgentRow>
              </Box>
            </Col>
          </Left>
          <Right>
            <Crumbs><T w={122} color="#0000ee" line>{'Source System KepEX  \u2192'}</T><T w={177}>Agent Instance MES_Sta_XX_TRACE</T></Crumbs>
            <Tabs>
              {tabs.map(t => <Tab key={t.t} $w={t.w} $on={t.on} $pl={t.pl}><T w={t.tw}>{t.t}</T></Tab>)}
              <Spin><Icon n="left" s={11} /></Spin><Spin><Icon n="right" s={11} /></Spin>
            </Tabs>
            <Page>
              <HelpButton><Icon n="help" /></HelpButton>
              <PageCols>
                <PortCol>
                  <Caption $h={17} $pt={0}><T w={47}>Port Type</T></Caption>
                  <PortList>
                    {ports.map(([t, w], i) => (
                      <PortRow key={t} $on={i === 0}><CheckBox>{i === 0 && <Icon n="check" s={11} />}</CheckBox><span><T w={w}>{t}</T></span></PortRow>
                    ))}
                  </PortList>
                </PortCol>
                <Settings>
                  <Field>
                    <Legend><T w={83}>SAP MII Settings</T></Legend>
                    <FormRow><Key><T w={21}>Port</T></Key><Input $w={132}><T w={23}>9001</T></Input><Spacer $w={7} /><HelpButton><Icon n="penGear" /></HelpButton></FormRow>
                    <FormRow><Key><T w={77}>Authentication</T></Key><Input $w={132}><T w={28}>None</T><Icon n="chev" s={10} /></Input></FormRow>
                    <FormRow><Key><T w={86}>Server Certificate</T></Key><Input $w={283} $off /></FormRow>
                    <Buttons><Button><T w={21}>Add</T></Button><Button><T w={26}>Clear</T></Button></Buttons>
                  </Field>
                </Settings>
              </PageCols>
            </Page>
          </Right>
        </PcoBody>
        <PcoStatus><Icon n="grip" s={14} /></PcoStatus>
      </Client>
    </Win>
  );
}

/* ---------- taskbar ---------- */

const Taskbar = styled.footer`
  height: 40px; flex: none; display: flex; align-items: center; border-top: 1px solid #8ba3ab; box-shadow: 0 -1px 0 #161b1d; color: #fff; padding-bottom: 1px;
  background: linear-gradient(90deg, #3e5a64 0, #58808c 60px, #537783 160px, #56808c 300px, #5c6f78 340px, #4b6c70 400px, #66714c 450px, #517984 490px, #54808d 800px, #4d7683 1050px, #3f5f68 1140px, #425e67 1340px);
`;
const Task = styled.span<{ $on?: number; $w?: number }>`
  width: ${p => p.$w || 59}px; height: 38px; margin-right: 3px; display: grid; place-items: center; flex: none; border-radius: 3px; border: 1px solid transparent;
  ${p => !!p.$on && css`border-color: rgba(225,240,245,.75); background: linear-gradient(160deg, rgba(255,255,255,${.2 * p.$on + .2}), rgba(255,255,255,${.18 * p.$on}) 60%); box-shadow: 0 0 0 1px rgba(20,40,45,.5);`}
`;
const Tray = styled.div`display: flex; align-items: center; height: 100%;`;
const Clock = styled.div`display: flex; flex-direction: column; align-items: center; width: 68px; line-height: 17px;`;
const Peek = styled.span`width: 14px; height: 38px; border: 1px solid #9fb1b6; background: linear-gradient(160deg, #7b9299, #3c5a61 60%);`;

const tasks: [string, number][] = [['explorer', 0], ['ie', 0], ['firefox', 1], ['chrome', 0], ['notepad', 0], ['tools', 0], ['ws', 0], ['cmd', 1], ['pco', 1], ['rdp', 1], ['palette', 2.2]];

function TaskbarView() {
  return (
    <Taskbar>
      <Task $w={55}><Picture n="start" s={37} /></Task>
      {tasks.map(([n, on]) => <Task key={n} $on={on}><Picture n={n} s={32} /></Task>)}
      <Spacer />
      <Tray>
        <T w={15}>EN</T><Spacer $w={7} />
        <Icon n="helpNavy" s={16} /><Spacer $w={6} /><Icon n="kbd" s={16} /><Spacer $w={5} />
        <Icon n="up" s={12} /><Spacer $w={11} /><Icon n="power" s={15} /><Spacer $w={9} />
        <svg width="16" height="12" viewBox="0 0 16 12"><path d="M1.500 12v-2M4.500 12V9M7.500 12V7M10.500 12V4.500M14 12V1" stroke="#fff" strokeWidth="2" /></svg>
        <Spacer $w={13} />
        <Clock><T w={44}>9:28 AM</T><T w={59}>17/11/2016</T></Clock>
        <Spacer $w={7} />
        <Peek />
      </Tray>
    </Taskbar>
  );
}

/* ---------- Paint ---------- */

const PaintFrame = styled.section`
  position: absolute; left: 211px; top: 256px; width: 1364px; height: 727px; border: 1px solid #05080c; border-radius: 7px;
  box-shadow: inset 0 0 0 1px #a9b5c2, 2px 4px 14px 5px rgba(0,0,0,.7); padding: 1px 6px 6px; display: flex; flex-direction: column; overflow: hidden;
  background: linear-gradient(180deg, transparent 30px, #8493a3 31px, #5a6c82 160px, #26405f 330px, #1c3252 560px, #2a3f60 100%);
  &::before { content: ''; position: absolute; inset: 1px 1px auto; height: 29px; border-radius: 6px 6px 0 0;
    background: linear-gradient(115deg, #76828f 0, #5e6d7e 8%, #293f58 20%, #1d3550 28%, #2c4560 33%, #2c425b 48%, #1c324c 50%, #30435c 56%, #233a55 62%, #30425a 72%, #2d4059 86%, #6e7b8c 94%, #8a96a4 100%); }
`;
const PaintTitle = styled.header`position: relative; height: 28px; flex: none; display: flex; align-items: center; padding-bottom: 3px; color: #000;`;
const Glow = styled.span`
  position: relative; display: flex; align-items: center; text-shadow: 0 0 6px #a8b4c2;
  &::before { content: ''; position: absolute; inset: -1px -4px -2px; border-radius: 9px; background: rgba(150,163,178,.6); filter: blur(5px); }
  & > * { position: relative; }
`;
const TSep = styled.span<{ $l: number; $r: number }>`width: 2px; height: 13px; background: #3e4c5c; border-right: 1px solid #9aa6b3; margin: 0 ${p => p.$r}px 0 ${p => p.$l}px;`;
const AeroButtons = styled.div`position: absolute; right: -1px; top: -1px; height: 20px; display: flex; border: 1px solid #b9c3cc; border-top: 0; border-radius: 0 0 5px 5px; overflow: hidden; color: #fff;`;
const Aero = styled.span<{ $w: number; $red?: boolean }>`
  width: ${p => p.$w}px; display: grid; place-items: center; border-right: 1px solid #39434f;
  background: ${p => (p.$red ? 'linear-gradient(#d8a297 0, #c0604a 45%, #a8301a 50%, #cf5334 100%)' : 'linear-gradient(#9aa5b1 0, #6d7a89 45%, #3c4a5b 50%, #56687c 100%)')};
`;
const PaintClient = styled.div`position: relative; flex: 1; min-height: 0; border: 1px solid #1b2633; border-width: 1px 0 0; display: flex; flex-direction: column; background: #fff; color: #1e395b;`;
const RibbonTabs = styled.div`height: 24px; flex: none; background: #dfe9f5; border-bottom: 1px solid #b4c3d7; display: flex; align-items: flex-end; color: #1e395b;`;
const FileTab = styled.span`width: 56px; height: 22px; margin-bottom: 1px; border: 1px solid #1f4e93; border-radius: 2px 2px 0 0; background: linear-gradient(#3f7fc6 0, #2b63ae 45%, #1a4a98 50%, #2f8cc8 100%); color: #fff; display: flex; align-items: center; justify-content: center; gap: 3px;`;
const HomeTab = styled.span`width: 54px; height: 23px; margin: 0 16px -1px 2px; padding-bottom: 2px; border: 1px solid #bccadd; border-bottom: 0; border-radius: 3px 3px 0 0; background: #fdfeff; display: grid; place-items: center;`;
const TabLabel = styled.span<{ $r?: number }>`height: 23px; display: grid; place-items: center; padding-bottom: 2px; margin-right: ${p => p.$r || 0}px;`;
const Ribbon = styled.div`height: 92px; flex: none; display: flex; background: linear-gradient(#f7fbfe 0, #e6eff9 25px, #dae5f4 45px, #dfe9f6 85px); border-bottom: 2px solid #a4b3c8;`;
const Group = styled.div<{ $w: number }>`width: ${p => p.$w}px; flex: none; padding-top: 4px; display: flex; flex-direction: column;`;
const GroupBody = styled.div`height: 70px; display: flex; align-items: flex-start;`;
const GroupLabel = styled.div<{ $dx?: number }>`height: 16px; line-height: 15px; text-align: center; color: #6e809b; padding-left: ${p => p.$dx || 0}px;`;
const GSep = styled.span`width: 1px; height: 77px; margin-top: 6px; background: #aebed4; box-shadow: 1px 0 0 #f6fafe; flex: none;`;
const Big = styled.div<{ $w: number; $ml?: number; $on?: boolean; $h?: number }>`
  width: ${p => p.$w}px; height: ${p => p.$h || 65}px; margin-left: ${p => p.$ml || 0}px; flex: none; display: flex; flex-direction: column; align-items: center; line-height: 13px; color: #1e395b;
  ${p => p.$on && css`border: 1px solid #c29b35; border-radius: 2px; margin-top: -1px; background: linear-gradient(#fbdfa0 0, #fbd58a 40%, #fdbf55 41%, #fdd078 100%);`}
`;
const BigIcon = styled.span`height: 37px; margin-bottom: 1px; flex: none; display: grid; place-items: center;`;
const SmallCol = styled.div<{ $ml?: number }>`margin-left: ${p => p.$ml || 0}px; display: flex; flex-direction: column;`;
const SmallItem = styled.div<{ $off?: boolean; $gap?: number }>`height: 22px; display: flex; align-items: center; gap: ${p => p.$gap ?? 3}px; color: ${p => (p.$off ? '#8d8d8d' : '#1e395b')}; & > span { margin-top: -1px; }`;
const ToolBoxes = styled.div`margin-left: 5px; padding-top: 8px; display: flex; flex-direction: column; gap: 8px;`;
const ToolBox = styled.div`width: 69px; height: 22px; border: 1px solid #b7c8de; border-radius: 2px; background: linear-gradient(#f8fbfe, #e6eef8); display: grid; grid-template-columns: repeat(3, 1fr); place-items: center; & > * + * { border-left: 1px solid #ccd8e8; } & > * { width: 100%; height: 100%; display: grid; place-items: center; }`;
const LetterA = styled.span`font: 700 19px/18px 'Liberation Serif', serif; color: #1e395b;`;
const ShapeBox = styled.div`width: 157px; height: 60px; margin: 3px 0 0 6px; border: 1px solid #b3c4da; background: #f5f8fd; display: flex;`;
const ShapeGrid = styled.div`width: 140px; display: grid; grid-template-columns: repeat(7, 20px); grid-auto-rows: 20px; place-items: center;`;
const ShapeScroll = styled.div`width: 15px; border-left: 1px solid #c8d5e6; background: #e6eef8; display: flex; flex-direction: column; justify-content: space-around; align-items: center; color: #3d4f68;`;
const Frame = styled.span<{ $w: number; $h: number; $c: string }>`width: ${p => p.$w}px; height: ${p => p.$h}px; border: 1px solid #808080; padding: 2px; background: #fff; background-clip: padding-box; &::after { content: ''; display: block; height: 100%; background: ${p => p.$c}; }`;
const Palette = styled.div`display: grid; grid-template-columns: repeat(10, 20px); grid-auto-rows: 20px; gap: 2px; margin: 1px 0 0 5px;`;
const Swatch = styled.span<{ $c?: string }>`border: 1px solid #a0a0a0; padding: 1px; background: ${p => (p.$c ? '#fff' : 'transparent')}; &::after { content: ''; display: block; height: 100%; background: ${p => p.$c || 'transparent'}; }`;
const Spectrum = styled.span`width: 29px; height: 29px; border: 2px solid #e4e4e4; outline: 1px solid #999; outline-offset: -1px; background: linear-gradient(transparent, rgba(128,128,128,.85)), linear-gradient(90deg, #f00, #ff0, #0f0, #0ff, #00f, #f0f, #f02);`;
const Work = styled.div`position: relative; flex: 1; min-height: 0; display: flex; background: linear-gradient(#c5cfe1, #dce6f2); padding-left: 5px;`;
const Canvas = styled.div`width: 1100px; margin-top: 5px; background: #fff; flex: none;`;
const CanvasShade = styled.div`width: 8px; margin-top: 10px; background: linear-gradient(90deg, rgba(100,120,150,.42), rgba(100,120,150,0));`;
const Handle = styled.span`position: absolute; left: 1105px; top: 402px; width: 5px; height: 5px; border: 1px solid #444; background: #fff;`;
const Scroll = styled.div`margin-left: auto; width: 17px; background: #f0f0f0; border-left: 1px solid #fff; display: flex; flex-direction: column; align-items: center; color: #333; padding: 2px 0;`;
const Thumb = styled.div`width: 15px; height: 346px; border: 1px solid #979797; border-radius: 2px; background: linear-gradient(90deg, #f5f5f5, #e3e3e5 50%, #cfcfd3); display: grid; place-items: center; margin: 3px 0 auto;`;
const PStatus = styled.footer`height: 26px; flex: none; background: #f0edec; border-top: 1px solid #8e8e8e; box-shadow: inset 0 1px 0 #fff; display: flex; align-items: center; color: #111; & > span { margin-top: -1px; }`;
const PSlot = styled.span<{ $w: number }>`width: ${p => p.$w}px; height: 23px; border-right: 1px solid #d2d0cf; display: flex; align-items: center; gap: 3px; padding-left: 4px; flex: none;`;
const Slider = styled.span`width: 84px; height: 16px; margin: 0 12px 0 10px; display: grid; place-items: center; background: linear-gradient(#a3a8a3, #a3a8a3) 0 6px / 100% 1px no-repeat, linear-gradient(#e3e8e4, #e3e8e4) 0 7px / 100% 2px no-repeat;`;

const Tri = ({ c = '#3d4f68', s = 10 }: { c?: string; s?: number }) => <svg width={s} height={s} viewBox="0 0 10 10"><path d="M2 3.500h6L5 7z" fill={c} /></svg>;

const shapes = [
  'M2 2l12 12', 'M1 14C3 5 6 4 8 9s4 3 6-6', 'M8 1.500a6.500 6.500 0 100 13 6.500 6.500 0 100-13z', 'M1.500 2h13v12h-13z', 'M4 2h8q2.500 0 2.500 2.500v7Q14.500 14 12 14H4q-2.500 0-2.500-2.500v-7Q1.500 2 4 2z', 'M5 2h7L9.500 9h5v5h-13z', 'M8 1.500L14.500 14h-13z',
  'M2 1.500L14 14H2z', 'M8 1.500L14.500 8 8 14.500 1.500 8z', 'M8 1.500L14.500 7 12 14H4L1.500 7z', 'M8 1l6.500 4v6L8 15l-6.500-4V5z', 'M1.500 5H8V1.500L14.500 8 8 14.500V11H1.500z', 'M14.500 5H8V1.500L1.500 8 8 14.500V11h6.500z', 'M5 14.500V8H1.500L8 1.500 14.500 8H11v6.500z',
  'M5 1.500V8H1.500L8 14.500 14.500 8H11V1.500z', 'M8 1l1.500 5.500L15 8l-5.500 1.500L8 15 6.500 9.500 1 8l5.500-1.500z', 'M8 1l1.800 5H15l-4.200 3.200L12.400 15 8 11.500 3.600 15l1.600-5.800L1 6h5.200z', 'M8 1l2 3.300h4.300L12.200 8l2.100 3.700H10L8 15l-2-3.300H1.700L3.800 8 1.700 4.300H6z',
  'M4 2h8q2.500 0 2.500 2v5Q14.500 11.500 12 11.500H7L4.500 14.500 5 11.500H4Q1.500 11.500 1.500 9V4.500Q1.500 2 4 2z', 'M8 2c9 0 9 10 0 10q-1.500 0-2.500-.3L2.500 14l1-3C-.5 7 2 2 8 2z', 'M4 3q2-2 4-1 2-1 4 1 3 0 2.500 3 1.500 2-.5 4 0 2.500-2.500 2.500-2 2-4 .5-2.500 1-3.500-.8-3 0-2.500-3Q0 7.500 1.700 6 1.500 3 4 3z',
];
const row1 = ['#000', '#7f7f7f', '#880015', '#ed1c24', '#ff7f27', '#fff200', '#22b14c', '#00a2e8', '#3f48cc', '#a349a4'];
const row2 = ['#fff', '#c3c3c3', '#b97a57', '#ffaec9', '#ffc90e', '#efe4b0', '#b5e61d', '#99d9ea', '#7092be', '#c8bfe7'];

function Paint() {
  return (
    <PaintFrame>
      <PaintTitle>
        <Picture n="palette" s={16} />
        <TSep $l={7} $r={10} />
        <Glow>
          <Icon n="savePaint" s={15} /><Spacer $w={8} /><Icon n="undoP" s={13} /><Spacer $w={9} /><Icon n="redoP" s={13} /><Spacer $w={6} />
          <svg width="9" height="10" viewBox="0 0 9 10"><path d="M1 1.500h7M1 4.500h7L4.500 9z" stroke="#000" fill="#000" /></svg>
          <TSep $l={8} $r={5} />
          <T w={80}>Untitled - Paint</T>
        </Glow>
        <AeroButtons>
          <Aero $w={28}><svg width="12" height="12"><path d="M1.500 6.500h9v3h-9z" fill="#fff" stroke="#4a5563" /></svg></Aero>
          <Aero $w={27}><svg width="12" height="12"><path d="M2.500 2.500h7v7h-7z" fill="none" stroke="#fff" strokeWidth="2" /></svg></Aero>
          <Aero $w={47} $red><Icon n="close" s={15} /></Aero>
        </AeroButtons>
      </PaintTitle>
      <PaintClient>
        <RibbonTabs>
          <FileTab>
            <svg width="14" height="12"><path d="M.5 .5h13v11H.5z" fill="#fff" stroke="#dfe9f5" /><path d="M7 3h5M7 5h5M7 7h5M7 9h5" stroke="#2b63ae" /><path d="M5 1v10" stroke="#2b63ae" /></svg>
            <Tri c="#fff" s={13} />
          </FileTab>
          <HomeTab><T w={30}>Home</T></HomeTab>
          <TabLabel><T w={26}>View</T></TabLabel>
          <Spacer />
          <TabLabel $r={5}><Icon n="helpBlue" s={13} /></TabLabel>
        </RibbonTabs>
        <Ribbon>
          <Group $w={105}>
            <GroupBody>
              <Big $w={38} $ml={7}>
                <BigIcon><svg width="26" height="32" viewBox="0 0 26 32"><path d="M1.500 4.500h23v26h-23z" fill="#a9b8d0" stroke="#8c9dba" /><path d="M4 8h18v20H4z" fill="#eff4fb" /><path d="M6 11h14M6 14h14M6 17h14M6 20h14M6 23h14" stroke="#c3cfe0" /><path d="M7 3h4l2-2 2 2h4v4H7z" fill="#d6deea" stroke="#8c9dba" /></svg></BigIcon>
                <T w={27}>Paste</T><Tri />
              </Big>
              <SmallCol $ml={6}>
                <SmallItem $off><Icon n="cutP" /><T w={18}>Cut</T></SmallItem>
                <SmallItem $off><Icon n="copyP" /><T w={26}>Copy</T></SmallItem>
              </SmallCol>
            </GroupBody>
            <GroupLabel><T w={51}>Clipboard</T></GroupLabel>
          </Group>
          <GSep />
          <Group $w={121}>
            <GroupBody>
              <Big $w={50}>
                <BigIcon><svg width="31" height="25"><path d="M1 1h29v23H1z" fill="#eaf3fc" stroke="#1c66a8" strokeWidth="1.300" strokeDasharray="2.500 1.500" /></svg></BigIcon>
                <T w={30}>Select</T><Tri />
              </Big>
              <SmallCol $ml={1}>
                <SmallItem $off $gap={2}><Icon n="cropP" s={15} /><T w={24}>Crop</T></SmallItem>
                <SmallItem $gap={2}><Icon n="resizeP" s={15} /><T w={32}>Resize</T></SmallItem>
                <SmallItem $gap={2}><Icon n="rotateP" s={15} /><T w={34}>Rotate</T><Tri /></SmallItem>
              </SmallCol>
            </GroupBody>
            <GroupLabel><T w={32}>Image</T></GroupLabel>
          </Group>
          <GSep />
          <Group $w={79}>
            <GroupBody>
              <ToolBoxes>
                <ToolBox><span><Icon n="pencil" /></span><span><Icon n="bucket" /></span><LetterA>A</LetterA></ToolBox>
                <ToolBox><span><Icon n="eraser" /></span><span><Icon n="picker" /></span><span><Icon n="lens" /></span></ToolBox>
              </ToolBoxes>
            </GroupBody>
            <GroupLabel><T w={27}>Tools</T></GroupLabel>
          </Group>
          <GSep />
          <Group $w={56}>
            <GroupBody>
              <Big $w={46} $ml={5} $on>
                <BigIcon><svg width="32" height="32" viewBox="0 0 32 32"><path d="M.5 .5h31v31H.5z" fill="#f6f2ee" stroke="#a98d55" /><path d="M9 8c-5 3-8 9-5 14 3 6 9 6 13 3-5 0-9-2-8-6 0-4 3-7 7-9-4 0-6 1-8 3z" fill="#e5532a" /><path d="M6 7c2-2 3-3 5-4" stroke="#ee8a60" strokeWidth="2" fill="none" /><path d="M13 25c0-7 3-10 8-10l3 4c0 5-5 9-11 6z" fill="#b07840" stroke="#6a4420" /><path d="M21 14L30 3l1.500 3-7.500 12z" fill="#8fa5bd" stroke="#41566e" /></svg></BigIcon>
                <T w={40}>Brushes</T><Tri />
              </Big>
            </GroupBody>
          </Group>
          <GSep />
          <Group $w={245}>
            <GroupBody>
              <ShapeBox>
                <ShapeGrid>
                  {shapes.map((d, i) => <svg key={i} width="16" height="16" viewBox="0 0 16 16"><path d={d} fill={i > 1 ? '#eef5fb' : 'none'} stroke="#1f6ba6" strokeWidth="1.200" /></svg>)}
                </ShapeGrid>
                <ShapeScroll>
                  <svg width="8" height="8" viewBox="0 0 10 10"><path d="M2 7h6L5 3.500z" fill="#aab5c4" /></svg><Tri />
                  <svg width="10" height="10" viewBox="0 0 10 10"><path d="M1.500 2.500h7" stroke="#3d4f68" /><path d="M2 4.500h6L5 8z" fill="#3d4f68" /></svg>
                </ShapeScroll>
              </ShapeBox>
              <SmallCol $ml={5}>
                <SmallItem $off><Icon n="outlineP" /><T w={39}>Outline</T><Tri c="#9aa5b4" /></SmallItem>
                <SmallItem $off><Icon n="fillP" /><T w={15}>Fill</T><Tri c="#9aa5b4" /></SmallItem>
              </SmallCol>
            </GroupBody>
            <GroupLabel $dx={10}><T w={37}>Shapes</T></GroupLabel>
          </Group>
          <GSep />
          <Group $w={52}>
            <GroupBody>
              <Big $w={51}>
                <BigIcon><svg width="32" height="28"><path d="M0 .5h32v1H0zM0 6h32v2H0zM0 13h32v4H0zM0 21h32v7H0z" fill="#1f3658" /></svg></BigIcon>
                <T w={21}>Size</T><Tri />
              </Big>
            </GroupBody>
          </Group>
          <GSep />
          <Group $w={357}>
            <GroupBody>
              <Big $w={42} $ml={5} $on $h={66}><BigIcon><Frame $w={32} $h={32} $c="#000" /></BigIcon><T w={28}>Color</T><T>1</T></Big>
              <Big $w={38} $ml={1}><BigIcon><Frame $w={24} $h={24} $c="#fff" /></BigIcon><T w={28}>Color</T><T>2</T></Big>
              <Palette>
                {[...row1, ...row2, ...Array(10).fill(undefined)].map((c, i) => <Swatch key={i} $c={c} />)}
              </Palette>
              <Big $w={42}><BigIcon><Spectrum /></BigIcon><T w={20}>Edit</T><T w={31}>colors</T></Big>
            </GroupBody>
            <GroupLabel><T w={33}>Colors</T></GroupLabel>
          </Group>
          <GSep />
        </Ribbon>
        <Work>
          <Canvas /><CanvasShade /><Handle />
          <Scroll>
            <Icon n="up" s={11} />
            <Thumb><svg width="7" height="8"><path d="M0 1.500h7M0 4.500h7M0 7.500h7" stroke="#666" /></svg></Thumb>
            <Icon n="down" s={11} />
          </Scroll>
        </Work>
        <PStatus>
          <PSlot $w={156}><Icon n="move" s={13} /></PSlot>
          <PSlot $w={156}><Icon n="selSize" s={14} /></PSlot>
          <PSlot $w={156}><Icon n="imgSize" s={15} /><T w={70}>1100 × 800px</T></PSlot>
          <PSlot $w={156} />
          <Spacer />
          <PSlot $w={1} />
          <Spacer $w={20} /><T w={29}>100%</T><Spacer $w={7} />
          <Icon n="minuscircle" />
          <Slider><svg width="10" height="16"><path d="M1 .5h8v11l-4 4-4-4z" fill="#f4f4f4" stroke="#707070" /></svg></Slider>
          <Icon n="pluscircle" /><Spacer $w={12} />
          <Icon n="grip" s={11} />
        </PStatus>
      </PaintClient>
    </PaintFrame>
  );
}

export default function App() {
  return (
    <>
      <Global />
      <Stage>
        <LeftMonitor>
          <Desktop>
            <Shortcuts>
              {shortcuts.map((s, i) => (
                <Shortcut key={i}>
                  <Picture n={s.icon} />
                  <Lines>{s.text.map(([t, w]) => <T key={t} w={w}>{t}</T>)}</Lines>
                </Shortcut>
              ))}
            </Shortcuts>
            <Bar>
              <BarInner>
                <Icon n="down" s={12} /><PinBox><Icon n="pin" s={13} /></PinBox><Icon n="signal" s={12} />
                <Spacer /><T w={44}>10.0.0.41</T><Spacer />
                <Icon n="min" s={12} /><Spacer $w={10} /><Icon n="restore" s={14} /><Spacer $w={9} /><Icon n="close" s={14} />
              </BarInner>
            </Bar>
            <KepWindow />
            <PcoWindow />
            <TaskbarView />
          </Desktop>
        </LeftMonitor>
        <RightMonitor><Paint /></RightMonitor>
      </Stage>
    </>
  );
}
